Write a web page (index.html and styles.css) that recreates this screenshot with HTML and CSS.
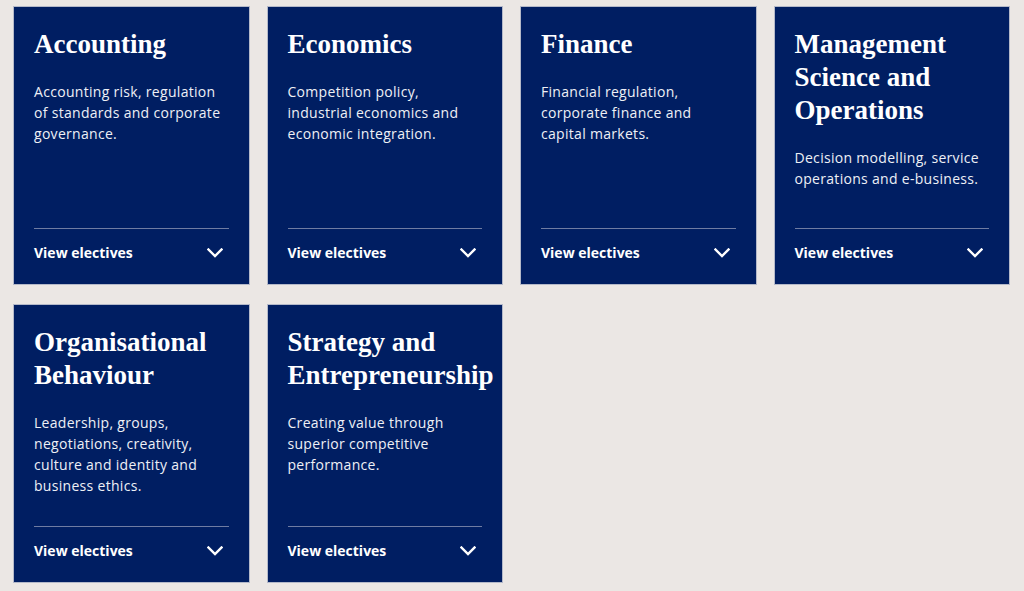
FILE: index.html
```html
<!DOCTYPE html>
<html lang="en">
<head>
  <meta charset="UTF-8">
  <meta name="viewport" content="width=device-width, initial-scale=1.0">
  <title>Specialisations</title>
  <link rel="stylesheet" href="styles.css">
</head>
<body>
  <main class="subjects">
    <article class="subject">
      <h2>Accounting</h2>
      <p>Accounting risk, regulation of standards and corporate governance.</p>
      <button class="electives">View electives <svg viewBox="0 0 16 10" width="16" height="10"><polyline points="1.5,1.5 8,8 14.5,1.5" /></svg></button>
    </article>

    <article class="subject">
      <h2>Economics</h2>
      <p>Competition policy, industrial economics and economic integration.</p>
      <button class="electives">View electives <svg viewBox="0 0 16 10" width="16" height="10"><polyline points="1.5,1.5 8,8 14.5,1.5" /></svg></button>
    </article>

    <article class="subject">
      <h2>Finance</h2>
      <p>Financial regulation, corporate finance and capital markets.</p>
      <button class="electives">View electives <svg viewBox="0 0 16 10" width="16" height="10"><polyline points="1.5,1.5 8,8 14.5,1.5" /></svg></button>
    </article>

    <article class="subject">
      <h2>Management Science and Operations</h2>
      <p>Decision modelling, service operations and e-business.</p>
      <button class="electives">View electives <svg viewBox="0 0 16 10" width="16" height="10"><polyline points="1.5,1.5 8,8 14.5,1.5" /></svg></button>
    </article>

    <article class="subject">
      <h2>Organisational Behaviour</h2>
      <p>Leadership, groups, negotiations, creativity, culture and identity and business ethics.</p>
      <button class="electives">View electives <svg viewBox="0 0 16 10" width="16" height="10"><polyline points="1.5,1.5 8,8 14.5,1.5" /></svg></button>
    </article>

    <article class="subject">
      <h2>Strategy and Entrepreneurship</h2>
      <p>Creating value through superior competitive performance.</p>
      <button class="electives">View electives <svg viewBox="0 0 16 10" width="16" height="10"><polyline points="1.5,1.5 8,8 14.5,1.5" /></svg></button>
    </article>
  </main>
</body>
</html>
```

FILE: styles.css
```css
* {
  box-sizing: border-box;
  margin: 0;
  padding: 0;
}

body {
  background-color: #ebe7e4;
  font-family: "Open Sans", "Noto Sans", sans-serif;
}

.subjects {
  display: grid;
  grid-template-columns: repeat(4, minmax(0, 1fr));
  column-gap: 17px;
  row-gap: 19px;
  padding: 6px 14px 0 13px;
}

.subject {
  display: flex;
  flex-direction: column;
  height: 279px;
  padding: 21px 20px 21px;
  background-color: #001e62;
  border: 1px solid #b4b9c9;
  color: #fff;
}

.subject h2 {
  font-family: "Liberation Serif", "Times New Roman", serif;
  font-size: 27px;
  line-height: 33px;
  font-weight: bold;
  margin-bottom: 20px;
}

.subject p {
  font-size: 14px;
  line-height: 21px;
  letter-spacing: 0.3px;
  color: #eef0f6;
}

.electives {
  display: flex;
  align-items: center;
  justify-content: space-between;
  margin-top: auto;
  padding: 14px 6px 0 0;
  border: none;
  border-top: 1px solid #6f7ca2;
  background: none;
  color: #fff;
  font-family: inherit;
  font-size: 14px;
  font-weight: bold;
  line-height: 20px;
  text-align: left;
  cursor: pointer;
}

.electives svg {
  fill: none;
  stroke: #fff;
  stroke-width: 2.4;
  stroke-linecap: square;
}
```
